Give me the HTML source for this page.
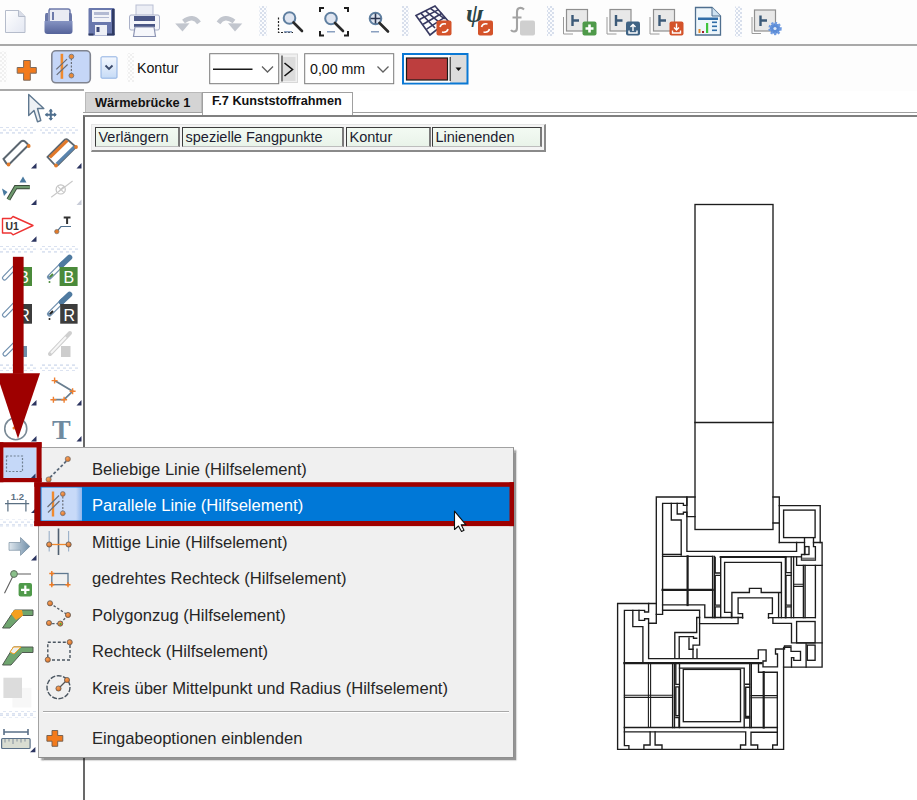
<!DOCTYPE html>
<html><head><meta charset="utf-8">
<style>
*{margin:0;padding:0;box-sizing:border-box}
html,body{width:917px;height:800px;overflow:hidden;background:#fff;font-family:"Liberation Sans",sans-serif;position:relative}
.abs{position:absolute}
#tb1{left:0;top:0;width:917px;height:45px;background:#fdfdfd}
#hl1{left:0;top:44px;width:917px;height:2px;background:#a9a9a9}
#tb2{left:0;top:46px;width:917px;height:45px;background:#fdfdfd}
#hl2{left:0;top:89px;width:84px;height:2px;background:#a9a9a9}
#lefttb{left:0;top:91px;width:84px;height:709px;background:#fff}
#canvas{left:83.4px;top:115px;width:834px;height:685px;background:#fff;border-left:2px solid #696969;border-top:2px solid #808080}
.st{top:127.3px;height:20px;background:linear-gradient(#f3faf3,#e9f3e9);border-top:1.5px solid #3c3c3c;border-left:1.5px solid #3c3c3c;border-right:2px solid #7a7a7a;border-bottom:1px solid #bdbdbd;font-size:14.5px;color:#1c1c30;padding-left:2.5px;line-height:18.6px;white-space:nowrap;overflow:hidden}
.txt{white-space:nowrap;line-height:1}
.menu{left:38px;top:447px;width:476px;height:311px;background:#f0f0f0;border:1px solid #a2a2a2;border-right-color:#8f8f8f;border-bottom-color:#8f8f8f;box-shadow:2.5px 2.5px 1.5px rgba(0,0,0,0.42)}
.mi{position:absolute;left:53px;margin-top:-0.3px;font-size:16.6px;color:#262626;white-space:nowrap;line-height:1}
</style></head><body>
<div class="abs" id="tb1"></div>
<div class="abs" id="hl1"></div>
<svg class="abs" style="left:0;top:0" width="917" height="46" viewBox="0 0 917 46">
<defs>
<pattern id="grip" width="4" height="4" patternUnits="userSpaceOnUse"><rect width="4" height="4" fill="#fbfcfe"/><rect x="0" y="0" width="2" height="2" fill="#d8dfec"/><rect x="2" y="2" width="2" height="2" fill="#d8dfec"/></pattern>
<linearGradient id="blueg" x1="0" y1="0" x2="0" y2="1"><stop offset="0" stop-color="#8593c2"/><stop offset="1" stop-color="#55639a"/></linearGradient>
<linearGradient id="pageg" x1="0" y1="0" x2="1" y2="1"><stop offset="0" stop-color="#ffffff"/><stop offset="1" stop-color="#e3e7f2"/></linearGradient>
</defs>
<!-- new doc -->
<path d="M5.5,10.5H19L25,16.5V32.5H5.5Z" fill="url(#pageg)" stroke="#b5bccb" stroke-width="1"/>
<path d="M18.5,10.5V16.5H25" fill="#d9dde8" stroke="#b5bccb" stroke-width="1"/>
<!-- open (tray) -->
<path d="M49,9H68Q70,9 70,11V22H49V11Q49,9 51,9Z" fill="#e9ebf3" stroke="#6d7aaa" stroke-width="1.5"/>
<rect x="52" y="12" width="2" height="8" fill="#6d7aaa"/>
<path d="M46,13Q45,13 45,16V22H48V13Z" fill="#6b78a8"/>
<path d="M71,13Q72,13 72,16V22H69V13Z" fill="#6b78a8"/>
<path d="M44.5,21H72.5V31Q72.5,34 69.5,34H47.5Q44.5,34 44.5,31Z" fill="url(#blueg)"/>
<!-- save -->
<rect x="88.5" y="8" width="26" height="27.5" rx="1" fill="#6a78ad"/>
<rect x="112" y="9" width="2.6" height="26" fill="#2f3a63"/>
<rect x="92" y="10" width="19" height="12" fill="#f2f3f8"/>
<rect x="94" y="12" width="15" height="3" fill="#b3bad3"/>
<rect x="94" y="17" width="15" height="1" fill="#b3bad3"/>
<rect x="95" y="25" width="12" height="10" fill="#eef0f6"/>
<rect x="96.5" y="27" width="3" height="5" fill="#3f4b7a"/>
<rect x="88.5" y="33.5" width="5" height="2" fill="#2f3a63"/><rect x="107" y="33.5" width="7.5" height="2" fill="#2f3a63"/>
<!-- printer -->
<rect x="136" y="5" width="17" height="12" fill="#eceef5" stroke="#b9bfd4" stroke-width="1"/>
<path d="M131,15H158Q159.5,15 159.5,17V28Q159.5,30 158,30H131Q129.5,30 129.5,28V17Q129.5,15 131,15Z" fill="#f4f5fa" stroke="#aab1c8" stroke-width="1"/>
<rect x="134" y="16" width="21" height="5" fill="#4a5686"/>
<rect x="134" y="24" width="21" height="3" fill="#4a5686"/>
<path d="M135,27H154L155.5,36.5H133.5Z" fill="#f6f7fb" stroke="#8c94b3" stroke-width="1.2"/>
<!-- undo / redo -->
<path d="M199,22.8Q193,14.5 183.5,21.5" fill="none" stroke="#c2c6ce" stroke-width="4.6"/><path d="M175.2,23.5L189.5,23.2L182.5,31.5Z" fill="#c2c6ce"/>
<path d="M218.5,22.8Q224.5,14.5 234,21.5" fill="none" stroke="#c2c6ce" stroke-width="4.6"/><path d="M242.3,23.5L228,23.2L235,31.5Z" fill="#c2c6ce"/>
<!-- grips -->
<rect x="259.5" y="6" width="7" height="30" fill="url(#grip)"/>
<rect x="402" y="6" width="6.5" height="30" fill="url(#grip)"/>
<rect x="547" y="6" width="7" height="30" fill="url(#grip)"/>
<rect x="735" y="6.5" width="7" height="30" fill="url(#grip)"/>
<!-- zoom window -->
<path d="M278.5,17.5V32.5H293" fill="none" stroke="#222" stroke-width="1.2" stroke-dasharray="2,1.5"/>
<circle cx="289.5" cy="18" r="5.8" fill="#dfe5f0" stroke="#5f7fa0" stroke-width="2"/>
<path d="M293.5,22.5L302,31" stroke="#2a2a2a" stroke-width="2.6" stroke-linecap="round"/>
<rect x="284" y="31" width="8" height="1.5" fill="#8aa0c0"/>
<!-- zoom extents -->
<path d="M320,12V8H324M344,8H348V12M348,31V35.5H344M324,35.5H320V31" fill="none" stroke="#1e1e1e" stroke-width="2"/>
<circle cx="331" cy="18.5" r="5.8" fill="#dfe5f0" stroke="#5f7fa0" stroke-width="2"/>
<path d="M335,23L343,31" stroke="#2a2a2a" stroke-width="2.6" stroke-linecap="round"/>
<rect x="327" y="31" width="8" height="1.5" fill="#8aa0c0"/>
<!-- zoom pan -->
<circle cx="375.5" cy="18.5" r="5.8" fill="#dfe5f0" stroke="#5f7fa0" stroke-width="2"/>
<path d="M375.5,13.5V23.5M370.5,18.5H380.5" stroke="#2a3550" stroke-width="1.6"/>
<path d="M379.5,23L388,31.5" stroke="#2a2a2a" stroke-width="2.6" stroke-linecap="round"/>
<rect x="371" y="31" width="8" height="1.5" fill="#8aa0c0"/>
<!-- mesh -->
<g stroke="#383a62" stroke-width="1.6" fill="none">
<path d="M416,15.5L435,6L448,21L430,35Z"/>
<path d="M420.8,13.1L435,28M425.5,10.8L441.2,23.8M430.3,8.4L444.7,18.9"/>
<path d="M419.5,19.5L438.5,9.6M423.1,24.2L442,13.3M426.6,29.2L445,17.2"/>
</g>
<rect x="436.5" y="20.5" width="15" height="15" rx="2" fill="#d4532a"/>
<path d="M440,27Q441,23 446,24M448,29Q447,33 442,32" stroke="#fff" stroke-width="1.6" fill="none"/>
<!-- psi -->
<text x="466" y="22" font-family="Liberation Serif" font-style="italic" font-weight="bold" font-size="26" fill="#2b4446">ψ</text>
<rect x="478" y="20.5" width="15" height="15" rx="2" fill="#d4532a"/>
<path d="M481.5,27Q482.5,23 487.5,24M489.5,29Q488.5,33 483.5,32" stroke="#fff" stroke-width="1.6" fill="none"/>
<!-- f -->
<path d="M524,9.5Q522,7.5 519.5,8Q517,8.5 517,12V28Q517,31.5 514,31.5Q512,31.5 511,30M512.5,17.5H521.5" fill="none" stroke="#a3a3a3" stroke-width="2.1"/>
<rect x="520" y="20.5" width="15" height="15" rx="2" fill="#cfcfcf"/>
<!-- T-frame icons -->
<g>
<path d="M563.5,17V34H573" fill="none" stroke="#9a9a9a" stroke-width="1"/>
<rect x="566.5" y="9.5" width="21" height="21.5" fill="#e8e8e8" stroke="#8f8f8f" stroke-width="1.2"/>
<path d="M572.5,15V26M572.5,20.5H579" stroke="#3c5a78" stroke-width="2.4"/>
<rect x="582.5" y="21.5" width="14" height="14" rx="2" fill="#4f9a4a"/>
<path d="M589.5,24.5V32.5M585.5,28.5H593.5" stroke="#fff" stroke-width="2.6"/>
</g>
<g>
<path d="M607,17V34H616.5" fill="none" stroke="#9a9a9a" stroke-width="1"/>
<rect x="610" y="9.5" width="21" height="21.5" fill="#e8e8e8" stroke="#8f8f8f" stroke-width="1.2"/>
<path d="M616,15V26M616,20.5H622.5" stroke="#3c5a78" stroke-width="2.4"/>
<rect x="626" y="21.5" width="14" height="14" rx="2" fill="#3f6384"/>
<path d="M633,31V24.5M630.5,27L633,24.5L635.5,27M629,30.5V33H637V30.5" stroke="#fff" stroke-width="1.4" fill="none"/>
</g>
<g>
<path d="M650,17V34H659.5" fill="none" stroke="#9a9a9a" stroke-width="1"/>
<rect x="653.5" y="9.5" width="21" height="21.5" fill="#e8e8e8" stroke="#8f8f8f" stroke-width="1.2"/>
<path d="M659.5,15V26M659.5,20.5H666" stroke="#3c5a78" stroke-width="2.4"/>
<rect x="669.5" y="21.5" width="14" height="14" rx="2" fill="#d4532a"/>
<path d="M676.5,23.5V30M674,27.5L676.5,30L679,27.5M672.5,30.5V33H680.5V30.5" stroke="#fff" stroke-width="1.4" fill="none"/>
</g>
<!-- chart doc -->
<path d="M695.5,7.5H712L720.5,16V35H695.5Z" fill="#eef6fb" stroke="#4f6f8f" stroke-width="1.3"/>
<path d="M712,7.5V16H720.5" fill="#cfe3f2" stroke="#4f6f8f" stroke-width="1"/>
<rect x="698" y="17.5" width="20" height="2.5" fill="#2f6da8"/>
<rect x="698.5" y="29" width="2" height="4" fill="#e88a2a"/>
<rect x="702" y="31" width="2" height="2" fill="#a0202a"/>
<rect x="706" y="23" width="2.2" height="10" fill="#3ec43e"/>
<rect x="712" y="21.5" width="5" height="1.6" fill="#2f6da8"/><rect x="712" y="25.5" width="5" height="1.6" fill="#2f6da8"/><rect x="712" y="29.5" width="5" height="1.6" fill="#2f6da8"/>
<!-- gear T icon -->
<g>
<path d="M752,17V33.5H761" fill="none" stroke="#9a9a9a" stroke-width="1"/>
<rect x="754.5" y="10" width="21" height="21" fill="#e8e8e8" stroke="#8f8f8f" stroke-width="1.2"/>
<path d="M760.5,15.5V26M760.5,20.5H767" stroke="#3c5a78" stroke-width="2.4"/>
<circle cx="775" cy="28.5" r="5.2" fill="#5b8bd6" stroke="#6e9ae0" stroke-width="3" stroke-dasharray="2,1.4"/>
<circle cx="775" cy="28.5" r="1.6" fill="#dde8f8"/>
</g>
</svg>

<div class="abs" id="tb2"></div>
<div class="abs" id="hl2"></div>
<svg class="abs" style="left:0;top:46px" width="917" height="45" viewBox="0 46 917 45">
<defs>
<pattern id="grip2" width="4" height="4" patternUnits="userSpaceOnUse"><rect width="4" height="4" fill="#fdfdfd"/><rect x="0" y="0" width="2" height="2" fill="#f0f0f0"/><rect x="2" y="2" width="2" height="2" fill="#f0f0f0"/></pattern>
<linearGradient id="ddg" x1="0" y1="0" x2="0" y2="1"><stop offset="0" stop-color="#f4f8fe"/><stop offset="1" stop-color="#c6dbf6"/></linearGradient>
</defs>
<rect x="0" y="51.5" width="6.5" height="30.5" fill="url(#grip2)"/>
<rect x="127.5" y="53" width="6.5" height="29" fill="url(#grip2)"/>
<!-- orange plus -->
<path d="M23.6,60.5H30.3V67.5H36.3V73.2H30.3V80.2H23.6V73.2H17.2V67.5H23.6Z" fill="#f27a1c" stroke="#7d6a5c" stroke-width="1"/>
<!-- selected button -->
<rect x="51.8" y="50.8" width="38.5" height="32" rx="4" fill="#c5d6f7" stroke="#80848f" stroke-width="1.6"/>
<rect x="60.6" y="53.8" width="2.6" height="25" fill="#f08a2e"/>
<path d="M56.3,69.4L67,59.1M56.7,74.9L67.6,64.5" stroke="#6a6e78" stroke-width="1.2"/>
<path d="M71.4,58.5V74" stroke="#6a6e78" stroke-width="1.2" stroke-dasharray="2,1.5"/>
<circle cx="71.4" cy="56.6" r="2.4" fill="#e88a3a" stroke="#6a6e78" stroke-width="0.8"/>
<circle cx="71.4" cy="75.6" r="2.4" fill="#e88a3a" stroke="#6a6e78" stroke-width="0.8"/>
<!-- dropdown square -->
<rect x="101" y="56.8" width="16" height="21.4" rx="1" fill="url(#ddg)" stroke="#8eb0e2" stroke-width="1"/>
<path d="M105.5,65.5L109,69L112.5,65.5" fill="none" stroke="#3a4a6a" stroke-width="1.8"/>
<!-- line combo -->
<rect x="209.7" y="53.7" width="69" height="30" fill="#fff" stroke="#7a7a7a" stroke-width="1"/>
<path d="M213,69.3H252.5" stroke="#1a1a1a" stroke-width="1.5"/>
<path d="M262,66.5L267.5,72L273,66.5" fill="none" stroke="#606060" stroke-width="1.3"/>
<!-- > button -->
<rect x="279.5" y="54" width="18" height="28.5" fill="#f0f0f0" stroke="#d8d8d8" stroke-width="1"/>
<rect x="281" y="55.5" width="2" height="26" fill="#7a7a7a"/>
<rect x="283" y="57" width="12.5" height="24" fill="#dcdcdc"/>
<path d="M284.5,63L292.5,69.5L284.5,76" fill="none" stroke="#111" stroke-width="1.6"/>
<!-- mm combo -->
<rect x="304.7" y="53.7" width="89" height="30" fill="#fff" stroke="#7a7a7a" stroke-width="1"/>
<path d="M377.5,66.5L383,72L388.5,66.5" fill="none" stroke="#606060" stroke-width="1.3"/>
<!-- color picker -->
<rect x="403" y="54" width="64.5" height="29.5" fill="#dcdcdc" stroke="#0a78d4" stroke-width="2"/>
<rect x="404" y="55" width="46" height="27.5" fill="#fff"/>
<rect x="406.5" y="58" width="41" height="22" fill="#bd3e3e" stroke="#1a1a1a" stroke-width="1.2"/>
<rect x="449.5" y="57" width="1.5" height="24" fill="#555"/>
<path d="M455.5,67.5H461.5L458.5,71Z" fill="#111"/>
</svg>
<div class="abs txt" style="left:137px;top:61.2px;font-size:14.2px;color:#111">Kontur</div>
<div class="abs txt" style="left:310px;top:62.3px;font-size:14.2px;color:#111">0,00 mm</div>

<div class="abs" id="lefttb"></div>
<svg class="abs" style="left:0;top:91px" width="84" height="709" viewBox="0 91 84 709">
<defs>
<pattern id="sep" width="6" height="7" patternUnits="userSpaceOnUse"><rect width="6" height="7" fill="#fff"/><rect x="0" y="0.5" width="3" height="1.2" fill="#c9d5ea"/><rect x="3" y="3.5" width="3" height="1.2" fill="#d4ddef"/><rect x="0" y="6" width="3" height="1" fill="#dce3f1"/></pattern>
<linearGradient id="arrg" x1="0" y1="0" x2="1" y2="0"><stop offset="0" stop-color="#dfe7ee"/><stop offset="1" stop-color="#6f8ea8"/></linearGradient>
</defs>
<!-- separators -->
<rect x="0" y="127" width="36" height="7" fill="url(#sep)"/><rect x="40" y="127" width="38" height="7" fill="url(#sep)"/>
<rect x="0" y="246" width="36" height="7" fill="url(#sep)"/><rect x="40" y="246" width="38" height="7" fill="url(#sep)"/>
<rect x="0" y="364" width="36" height="7" fill="url(#sep)"/><rect x="40" y="364" width="38" height="7" fill="url(#sep)"/>
<rect x="0" y="519.5" width="36" height="7" fill="url(#sep)"/>
<rect x="0" y="711" width="36" height="7" fill="url(#sep)"/>
<!-- cursor -->
<path d="M28.7,94.5L43.8,108.5H37.5L40.8,120.5L37.5,121.8L34,110.5L28.7,115.5Z" fill="#eef1f4" stroke="#5f7890" stroke-width="1.4" stroke-linejoin="round"/>
<path d="M50.8,109.5V120M45.6,114.7H56" stroke="#4f6f8e" stroke-width="2"/>
<path d="M50.8,108.7L48.5,111.5H53.1ZM50.8,120.7L48.5,117.9H53.1ZM44.8,114.7L47.6,112.4V117ZM56.8,114.7L54,112.4V117Z" fill="#4f6f8e"/>
<!-- tool rect pen -->
<path d="M3.5,159L21,141.5Q23,140 25,141.5L28.5,145L10,163.5Q8,165 6.5,163.5Z" fill="#fff" stroke="#5b6670" stroke-width="2"/>
<circle cx="28.7" cy="146" r="1.9" fill="#e07a2a"/><circle cx="8.5" cy="164.5" r="1.9" fill="#e07a2a"/>
<path d="M31,168.5H36.5V163Z" fill="#2c3560"/>
<!-- tool rect colored -->
<path d="M47.5,157L65,139.5Q66.5,138.5 68,140L76,147L58,165Q56.5,166 55,165Z" fill="#fff" stroke="#5b6670" stroke-width="1.8"/>
<path d="M48.5,156.5L66,139.5L68.5,141.5L51,158.5Z" fill="#e0782a"/>
<path d="M55.5,163L73.5,145.5L76,147.5L58,165Z" fill="#5a84ad"/>
<circle cx="76" cy="147" r="1.9" fill="#e07a2a"/><circle cx="56" cy="165.5" r="1.9" fill="#e07a2a"/>
<path d="M76.5,168.5H81.5V163Z" fill="#2c3560"/>
<!-- green bent -->
<path d="M8.4,199.5L15.7,187.1H29.8" fill="none" stroke="#3a4a3a" stroke-width="4.2"/>
<path d="M8.4,199.5L15.7,187.1H29.8" fill="none" stroke="#6f9a6f" stroke-width="2.4"/>
<path d="M2,188.5L7.5,192L4,196Z" fill="#4a7aa0"/><path d="M23,176.5L26.5,182.5H19.5Z" fill="#4a7aa0"/>
<path d="M31,205H36.5V199.5Z" fill="#2c3560"/>
<!-- gray circle x -->
<circle cx="60.7" cy="189.4" r="4.6" fill="none" stroke="#c2c2c2" stroke-width="1.2"/>
<path d="M51.2,197.2L72.6,181M57.5,186.2L64,192.6M64,186.2L57.5,192.6" stroke="#c8c8c8" stroke-width="1.1"/>
<path d="M76.5,205H81.5V199.5Z" fill="#c8ccd8"/>
<!-- U1 -->
<path d="M2.5,218.5H11L13,216.5L33,225.5L13,234.8L11,233H2.5Z" fill="#fff" stroke="#ee3333" stroke-width="1.4" stroke-linejoin="round"/>
<text x="5.5" y="229.8" font-family="Liberation Sans" font-weight="bold" font-size="10.5" fill="#333">U1</text>
<path d="M31,241.8H36.5V236.3Z" fill="#2c3560"/>
<!-- T with dot -->
<path d="M63.7,217.5H70.5M67.1,217.5V224" stroke="#333" stroke-width="2"/>
<path d="M56.8,231.6L61,226.5H71" fill="none" stroke="#4f6f8e" stroke-width="1.2"/>
<circle cx="56.8" cy="231.6" r="2.2" fill="#e07a2a" stroke="#6a6a6a" stroke-width="0.6"/>
<!-- droppers B -->
<path d="M4.5,278L20,262" stroke="#6f8fae" stroke-width="5.2" stroke-linecap="round"/><path d="M4.5,278L18,264" stroke="#fff" stroke-width="2.8" stroke-linecap="round"/>
<rect x="14.5" y="267" width="17.5" height="19" fill="#4a8a3a"/><text x="18.3" y="283" font-family="Liberation Sans" font-size="16" fill="#fff">B</text>
<path d="M49.5,277L63,263.5" stroke="#6f8fae" stroke-width="5.2" stroke-linecap="round"/><path d="M50,276.5L60,266.5" stroke="#fff" stroke-width="2.6"/>
<path d="M61.5,265L69.5,257.5" stroke="#4f7aa0" stroke-width="5.6" stroke-linecap="round"/>
<path d="M50,277L53,274" stroke="#4a8a3a" stroke-width="2"/><circle cx="49.5" cy="282" r="1" fill="#4a8a3a"/>
<rect x="59.6" y="267" width="18" height="19" fill="#4a8a3a"/>
<text x="63.5" y="283" font-family="Liberation Sans" font-size="16" fill="#fff">B</text>
<!-- droppers R -->
<path d="M4.5,315L20,299" stroke="#6f8fae" stroke-width="5.2" stroke-linecap="round"/><path d="M4.5,315L18,301" stroke="#fff" stroke-width="2.8" stroke-linecap="round"/>
<rect x="14.5" y="304" width="17.5" height="19.7" fill="#3c3c3c"/><text x="18.3" y="320.5" font-family="Liberation Sans" font-size="16" fill="#fff">R</text>
<path d="M49.5,314L63,300.5" stroke="#6f8fae" stroke-width="5.2" stroke-linecap="round"/><path d="M50,313.5L60,303.5" stroke="#fff" stroke-width="2.6"/>
<path d="M61.5,302L69.5,294.5" stroke="#4f7aa0" stroke-width="5.6" stroke-linecap="round"/>
<path d="M50,314L53,311" stroke="#222" stroke-width="2"/><circle cx="49.5" cy="319" r="1" fill="#222"/>
<rect x="60.2" y="304" width="17.4" height="19.7" fill="#3c3c3c"/>
<text x="63.5" y="320.5" font-family="Liberation Sans" font-size="16" fill="#fff">R</text>
<!-- droppers gray -->
<path d="M5,354L20,339" stroke="#6f8fae" stroke-width="5.2" stroke-linecap="round"/><path d="M5,354L18,341" stroke="#fff" stroke-width="2.8" stroke-linecap="round"/>
<rect x="23" y="346" width="4" height="11" fill="#6f8ea8"/>
<path d="M50,354L70,333" stroke="#cfcfcf" stroke-width="4" stroke-linecap="round"/><path d="M51,353L66,337" stroke="#f6f6f6" stroke-width="2"/>
<rect x="61" y="346" width="9.5" height="11" fill="#cdcdcd"/>
<!-- polyline tool -->
<path d="M54.6,380.6L72.6,391.3L64.1,399.7H53.4" fill="none" stroke="#6a7f90" stroke-width="1.8"/>
<g stroke="#f08030" stroke-width="1.4"><path d="M51.6,380.6H57.6M54.6,377.6V383.6M69.6,391.3H75.6M72.6,388.3V394.3M61.1,399.7H67.1M64.1,396.7V402.7M50.4,399.7H56.4M53.4,396.7V402.7"/></g>
<path d="M31,405.5H36.5V400Z" fill="#2c3560"/><path d="M76.5,405.5H81.5V400Z" fill="#2c3560"/>
<!-- circle tool -->
<circle cx="15.75" cy="428.7" r="11" fill="none" stroke="#7a8a96" stroke-width="1.6"/>
<circle cx="14" cy="428" r="1.5" fill="#f08030"/>
<path d="M31,441.6H36.5V436.1Z" fill="#2c3560"/>
<!-- T text tool -->
<text x="52" y="439" font-family="Liberation Serif" font-weight="bold" font-size="28" fill="#6f8aa0">T</text>
<path d="M76.5,441.6H81.5V436.1Z" fill="#2c3560"/>
<!-- dashed rect (highlighted) -->
<rect x="3.4" y="447.5" width="33" height="31.5" fill="#c5d8f8"/>
<rect x="6.5" y="456" width="16" height="15.5" fill="none" stroke="#6f7f90" stroke-width="1.2" stroke-dasharray="2,1.6"/>
<path d="M30.5,478.5H35.5V473.5Z" fill="#2c3560"/>
<!-- dimension -->
<text x="10.8" y="500" font-family="Liberation Sans" font-weight="bold" font-size="9.5" fill="#5f7285">1.2</text>
<path d="M5,503.6H29.2M7.9,500V511.5M25.9,500V511.5" stroke="#5a6f82" stroke-width="1.2"/>
<path d="M31,513H35V509Z" fill="#2c3560"/>
<!-- blue arrow -->
<path d="M9,542.5H20.5V537.5L29.8,546.4L20.5,555.4V550.3H9Z" fill="url(#arrg)" stroke="#6a8296" stroke-width="0.6"/>
<path d="M31,560.5H36.5V555Z" fill="#2c3560"/>
<!-- line plus -->
<path d="M4.5,593.2L14,574H31" fill="none" stroke="#5f5f5f" stroke-width="1.1"/>
<circle cx="14" cy="574" r="3.4" fill="#8ac08a" stroke="#5f6f5f" stroke-width="1"/>
<rect x="18.6" y="583" width="13.4" height="13.6" rx="2" fill="#4f9a4a"/>
<path d="M25.3,585.5V594M21,589.8H29.5" stroke="#fff" stroke-width="2.2"/>
<!-- bent icons -->
<path d="M2.5,628L14.5,610H33V615.5H22L10,628Z" fill="#6fa56f" stroke="#505a50" stroke-width="1"/>
<path d="M11,614L14.5,610H22L23,615.5L16,620Z" fill="#f5a020"/>
<path d="M2.5,665L13.5,647H33V652.5H22L11,665Z" fill="#6fa56f" stroke="#505a50" stroke-width="1"/>
<path d="M13.5,647H21L14,654L10,652Z" fill="#eef0ee" stroke="#f5a020" stroke-width="1"/>
<!-- gray squares -->
<rect x="12.4" y="687.8" width="19" height="19.7" fill="#f7f7f7"/>
<rect x="3.4" y="677.7" width="18.6" height="20.3" fill="#dcdcdc"/>
<!-- ruler -->
<path d="M4,732H28M4,729V735M28,729V735" stroke="#5a7088" stroke-width="1.6"/>
<rect x="1.6" y="738.5" width="28.5" height="10" rx="1" fill="#d9ddd2" stroke="#5a7088" stroke-width="1.2"/>
<path d="M5,739V742.5M9,739V741.5M13,739V744M17,739V741.5M21,739V742.5M25,739V741.5" stroke="#7a8898" stroke-width="0.9"/>
<path d="M30,752.2H35.4V747Z" fill="#2c3560"/>
</svg>


<!-- tabs -->
<div class="abs" style="left:85px;top:92px;width:117px;height:21px;background:#d4d4d4;border:1px solid #b9b9b9;border-bottom:none"></div>
<div class="abs txt" style="left:95px;top:97px;font-size:12.8px;font-weight:bold;color:#111">Wärmebrücke 1</div>
<div class="abs" style="left:83px;top:112px;width:834px;height:1px;background:#a0a0a0"></div>
<div class="abs" style="left:202px;top:92px;width:151px;height:24px;background:#fff;border:1px solid #a0a0a0;border-bottom:none"></div>
<div class="abs txt" style="left:212px;top:95px;font-size:12.7px;font-weight:bold;color:#111">F.7 Kunststoffrahmen</div>

<div class="abs" id="canvas"></div>
<svg class="abs" style="left:0;top:0" width="917" height="800" viewBox="0 0 917 800" fill="none" stroke="#1c1c1c" stroke-width="1.35" stroke-linejoin="miter" stroke-linecap="square">
<!-- upper glass -->
<rect x="695" y="204.5" width="78" height="325"/>
<path d="M695,422.5H773"/>
<!-- gaskets at glass -->
<path d="M686.9,497V516.6H695"/>
<path d="M773,497H779.3V542.5M773,523H779.3"/>
<!-- upper frame left profile -->
<path d="M695,497H656.3V614.3H662.6V503.4H683.4V505.3H686.9V497"/>
<path d="M671.3,503.4V520H681.2V555"/>
<path d="M677.2,503.4V514H683.4V512.2H686.9V551.3H796.6V542.5"/>
<path d="M662.6,554.4H681.2"/>
<path d="M662.6,556.3H712.8"/>
<path d="M720.7,557H785.4" stroke-width="2.2"/>
<path d="M785.4,556.8H801.2"/>
<!-- upper right box -->
<path d="M779.3,505.6H820.2V542.5"/>
<rect x="783.6" y="510.1" width="31.5" height="27.5"/>
<path d="M779.3,542.5H804.5"/>
<path d="M804.5,537.6V554.5H801.5V560.1H815.4V546.6H813.5V537.6"/>
<rect x="804.9" y="546.6" width="4.1" height="7.9"/>
<rect x="801.8" y="557.6" width="13.4" height="2.3" fill="#777" stroke="none"/>
<path d="M813.5,542.5H822.1V667.1H783.6"/>
<path d="M796.6,556.8V565.4H822.1"/>
<path d="M793.6,556.8V617.6"/>
<path d="M803.4,565.4V617.6M805.1,565.4V617.6M815.4,565.4V617.6"/>
<path d="M793.6,584.2H803.4M793.6,586.4H803.4" stroke-width="1.1"/>
<!-- upper cells -->
<path d="M687.6,556.3V605" stroke-width="2.2"/>
<path d="M662.6,589.8H712.6" stroke-width="2.2"/>
<path d="M712.6,556.3V617.5M714.4,556.3V617.5M720.7,557V617.5"/>
<path d="M715.2,557.5V573H720M715.2,575.3V605.1H720M715.2,575.3H720M715.2,606.9V617.5M715.2,606.9H720"/>
<path d="M785.4,557V617.5M791.2,556.8V617.5"/>
<path d="M786,557.5V572.6H791M786,575.3V605.1H791M786,575.3H791M786,606.9V617.5M786,606.9H791"/>
<!-- sash -->
<path d="M731.4,617.5V612.4H724.6V562.4H781.4V617.5"/>
<path d="M778.6,592.8V617.5"/>
<path d="M731.9,617.5V592.5H749.4V588.3H761.2V592.5H781.4"/>
<path d="M742.6,618V613.6H738.1V597.8H772.4V613.6H768.5V618"/>
<path d="M662.6,604.9H704.8V617.5H742.6"/>
<path d="M768.5,617.6H815.3"/>
<path d="M662.6,610.2H699.6V645.1H693V658.1"/>
<path d="M699.6,623.6H738.1V617.5"/>
<path d="M772.9,617.6V623.4H791.5V642.9H822.1"/>
<rect x="796.6" y="621.5" width="18.5" height="21.4"/>
<path d="M699.6,617.5H696.7V632.5H674.8V658.1"/>
<path d="M679.2,658.1V636.6H693.5V638.2H696.7M689,638.2V649.2H693"/>
<path d="M697,649.2V658.1"/>
<!-- lower frame -->
<path d="M656.3,603.5H617.6V749.4H783.6V647.4H791V651.3H800.5V660.3H793.8V657.6H791.5V667.1"/>
<path d="M806.1,644V667.1"/>
<rect x="807.3" y="645.1" width="7.8" height="15.2"/>
<path d="M648.6,603.5V612H644.6V610.3H624.4V745.6H628.9V749.4"/>
<path d="M632.8,610.3V626.6H642.9V663.1"/>
<path d="M639,610.3V620.4H644.6V618.7H648.6V658.6H758.3V649.8H766.1V661H763V666.8H777.5V654H775.5V649H784.5V646H791"/>
<path d="M656.3,614.3V623.2H648.6"/>
<path d="M624.4,663.2H761.5" stroke-width="2.2"/>
<!-- lower cells -->
<path d="M648.4,663.2V727.5M650.6,663.2V727.5" stroke-width="1.1"/>
<path d="M624.4,695.2H672.6M624.4,697.4H672.6" stroke-width="1.1"/>
<path d="M672.6,663.2V727.5M674.5,663.2V727.5M679.5,663.2V727.5"/>
<path d="M675.8,664V684.4H679M675.8,686.9H679V715.6H675.8V686.9M675.8,717.5H679V727"/>
<path d="M679.5,668.1H744.2V727.5"/>
<rect x="683.3" y="669.4" width="57.2" height="52.3"/>
<path d="M745.7,684.2H749.5M745.7,687.2H749.5M745.7,716.5H749.5M745.7,718H749.5M745.7,687.2V716.5"/>
<path d="M749.8,663.2V727.5" stroke-width="1.4"/><path d="M751.3,663.2V727.5" stroke-width="1.4"/>
<path d="M758.5,663.2V672.2H777.3V745H772.7V749.4"/>
<path d="M763.7,672.2V727.5" stroke-width="2.2"/>
<path d="M751,695.6H777.3M751,697.8H777.3" stroke-width="1.1"/>
<path d="M624.4,727.5H777.3" stroke-width="1.5"/>
<path d="M624.4,731.9H745.7V745H740.5V749.4"/>
<path d="M650.1,731.9V745H643.9V749.4M655.1,731.9V745H662V749.4"/>
<path d="M751,732.2H777.3M751,732.2V745H757.7V749.4"/>
</svg>



<!-- sub tabs -->
<div class="abs" style="left:91px;top:123.5px;width:455px;height:28.5px;background:#f4f4f4;border-top:1px solid #e6e6e6;border-left:1px solid #e6e6e6;border-right:2px solid #8a8a8a;border-bottom:2.5px solid #8a8a8a"></div>
<div class="abs st" style="left:95px;width:85px">Verlängern</div>
<div class="abs st" style="left:182px;width:162px">spezielle Fangpunkte</div>
<div class="abs st" style="left:346px;width:85px">Kontur</div>
<div class="abs st" style="left:432px;width:110px">Linienenden</div>

<!-- context menu -->
<div class="abs menu">
  <div class="mi" style="top:14px">Beliebige Linie (Hilfselement)</div>
  <div class="abs" style="left:0;top:38px;width:474px;height:35px;background:#0078d7"></div>
  <div class="mi" style="top:50px;color:#fff">Parallele Linie (Hilfselement)</div>
  <div class="mi" style="top:87px">Mittige Linie (Hilfselement)</div>
  <div class="mi" style="top:123px">gedrehtes Rechteck (Hilfselement)</div>
  <div class="mi" style="top:160px">Polygonzug (Hilfselement)</div>
  <div class="mi" style="top:196px">Rechteck (Hilfselement)</div>
  <div class="mi" style="top:233px">Kreis über Mittelpunkt und Radius (Hilfselement)</div>
  <div class="abs" style="left:4px;top:263.3px;width:466px;height:1.6px;background:#a8a8a8;border-bottom:1px solid #fff"></div>
  <div class="mi" style="top:283px">Eingabeoptionen einblenden</div>
</div>
<svg class="abs" style="left:0;top:0" width="917" height="800" viewBox="0 0 917 800">
<defs>
<radialGradient id="dotg" cx="0.4" cy="0.35" r="0.7"><stop offset="0" stop-color="#f7a05a"/><stop offset="1" stop-color="#d26a20"/></radialGradient>
<linearGradient id="hlg" x1="0" y1="0" x2="1" y2="0"><stop offset="0" stop-color="#c8daf8"/><stop offset="0.85" stop-color="#c8daf8"/><stop offset="1" stop-color="#8fb6ec"/></linearGradient>
</defs>
<!-- menu icons -->
<path d="M50,477.5L66.5,461" stroke="#5a6878" stroke-width="1.8" stroke-dasharray="3,2"/>
<circle cx="48.6" cy="479.5" r="2.6" fill="url(#dotg)" stroke="#707070" stroke-width="0.7"/>
<circle cx="67.8" cy="459" r="2.6" fill="url(#dotg)" stroke="#707070" stroke-width="0.7"/>
<rect x="41.5" y="487.5" width="40.5" height="33" fill="url(#hlg)"/>
<rect x="51.8" y="491.5" width="2.4" height="25" fill="#f08a2e"/>
<path d="M47.5,507L59,495.5M48,512.5L59.5,501" stroke="#6a6e78" stroke-width="1.2"/>
<path d="M62.8,496.5V511" stroke="#6a6e78" stroke-width="1.2" stroke-dasharray="2,1.5"/>
<circle cx="62.8" cy="494" r="2.4" fill="url(#dotg)" stroke="#6a6e78" stroke-width="0.7"/>
<circle cx="62.8" cy="513.3" r="2.4" fill="url(#dotg)" stroke="#6a6e78" stroke-width="0.7"/>
<path d="M58.5,528.5V555" stroke="#4f5f70" stroke-width="1.6"/>
<path d="M49.2,531V551.5M68.6,531V551.5" stroke="#9ab0c8" stroke-width="1.1"/>
<path d="M49.2,544.5H68.6" stroke="#f08a2e" stroke-width="1.3"/>
<circle cx="49.2" cy="544.5" r="2.6" fill="url(#dotg)" stroke="#555" stroke-width="0.8"/>
<circle cx="68.6" cy="544.5" r="2.6" fill="url(#dotg)" stroke="#555" stroke-width="0.8"/>
<rect x="51.8" y="573.5" width="16.2" height="11.2" fill="none" stroke="#5f7890" stroke-width="1.3"/>
<path d="M49.3,573.5H54.3M51.8,571V576M49.3,584.7H54.3M51.8,582.2V587.2M65.5,584.7H70.5M68,582.2V587.2" stroke="#f07a20" stroke-width="1.4"/>
<path d="M50,603.3L68,615L60.2,623.6H49" fill="none" stroke="#555e68" stroke-width="1.3" stroke-dasharray="2.5,1.8"/>
<circle cx="50" cy="603.3" r="2.6" fill="url(#dotg)" stroke="#555" stroke-width="0.7"/>
<circle cx="68" cy="615" r="2.6" fill="url(#dotg)" stroke="#555" stroke-width="0.7"/>
<circle cx="60.2" cy="623.6" r="2.6" fill="url(#dotg)" stroke="#555" stroke-width="0.7"/>
<circle cx="60.5" cy="624" r="1" fill="#3ab03a"/>
<circle cx="49" cy="623" r="2.6" fill="url(#dotg)" stroke="#555" stroke-width="0.7"/>
<rect x="47.8" y="642.2" width="22.2" height="17.8" fill="none" stroke="#4a5560" stroke-width="1.4" stroke-dasharray="3,2"/>
<circle cx="47.8" cy="659.7" r="2.6" fill="url(#dotg)" stroke="#555" stroke-width="0.7"/>
<circle cx="69.7" cy="642.2" r="2.6" fill="url(#dotg)" stroke="#555" stroke-width="0.7"/>
<circle cx="58.5" cy="687.2" r="11.5" fill="none" stroke="#4a5560" stroke-width="1.4" stroke-dasharray="5,1.5"/>
<path d="M58.5,688.5L67,680" stroke="#555" stroke-width="1.3"/>
<circle cx="58.5" cy="688.5" r="2.6" fill="url(#dotg)" stroke="#555" stroke-width="0.7"/>
<circle cx="67" cy="680" r="2.6" fill="url(#dotg)" stroke="#555" stroke-width="0.7"/>
<path d="M52,730.5H57.7V735.5H62.8V741.2H57.7V746.3H52V741.2H46.9V735.5H52Z" fill="#f27a1c" stroke="#6d5a4c" stroke-width="0.9"/>
<!-- red annotations -->
<g fill="#9e0000">
<rect x="12.9" y="256.8" width="10.7" height="117"/>
<path d="M-3.5,373.3H40L18,438.5Z"/>
<rect x="0" y="442.2" width="41.6" height="5.3"/>
<rect x="0" y="442.2" width="3.4" height="40"/>
<rect x="36.5" y="442.2" width="5.1" height="40"/>
<rect x="0" y="478" width="41.6" height="4.2"/>
<rect x="34.3" y="482.2" width="479.7" height="4.6"/>
<rect x="34.3" y="521" width="479.7" height="5.1"/>
<rect x="34.3" y="482.2" width="6.2" height="43.9"/>
<rect x="509.5" y="482.2" width="4.5" height="43.9"/>
</g>
<!-- mouse cursor -->
<path d="M454.5,511.2V529.5L458.5,526L461.5,531.5L464,530.2L461.2,524.8H466Z" fill="#fff" stroke="#111" stroke-width="1.1" stroke-linejoin="round"/>
</svg>

</body></html>
